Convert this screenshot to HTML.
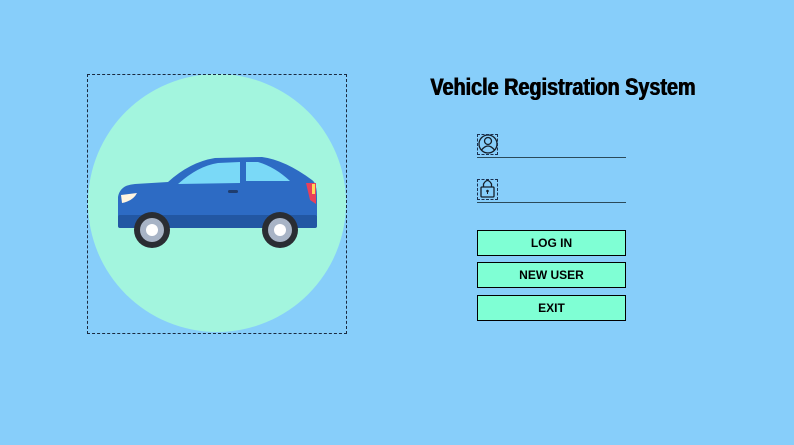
<!DOCTYPE html>
<html><head><style>
html,body{margin:0;padding:0}
body{width:794px;height:445px;background:#87cefa;position:relative;overflow:hidden;font-family:"Liberation Sans",sans-serif}
.frame{position:absolute;left:87px;top:74px;width:258px;height:258px;border:1px dashed #1a2a40}
.title{position:absolute;left:430px;top:74px;width:266px;font-weight:bold;font-size:24px;white-space:nowrap;transform-origin:left top;transform:scaleX(0.825);letter-spacing:0px;color:#000;text-shadow:1px 0 0 #000,0.5px 0 0 #000}
.line{position:absolute;left:477px;width:149px;height:1px;background:#2a4a5a}
.ic{position:absolute;left:477px;width:21px;height:21px;border:1px dashed #1a3050;box-sizing:border-box}
.btn{position:absolute;left:477px;width:149px;height:26px;background:#7fffd4;border:1px solid #000;box-sizing:border-box;font-weight:bold;font-size:12px;text-align:center;line-height:24px;color:#000}
</style></head><body>
<svg width="794" height="445" style="position:absolute;left:0;top:0">
<circle cx="217" cy="203" r="129" fill="#a3f5de"/>
<path d="M118 197 Q120 185 135 184 L168 182 Q190 162 215 158 L262 157 Q285 160 312 180 Q317 183 317 198 L317 225 Q317 228 313 228 L121 228 Q118 228 118 224 Z" fill="#2d6bc4"/>
<rect x="118" y="215" width="199" height="13" rx="2" fill="#2257a3"/>
<path d="M178 184 Q198 166 218 163 L240 162 L240 183 Z" fill="#7ad9f7"/>
<path d="M246 162 L258 162 Q275 167 290 181 L246 181 Z" fill="#7ad9f7"/>
<rect x="228" y="190" width="10" height="3" rx="1.5" fill="#1f3d6e"/>
<path d="M121 195 L137 193 Q133 201 122 203 Z" fill="#fff4e0"/>
<path d="M306 183 L316 183 L316 204 L310 200 Z" fill="#e8405a"/>
<rect x="312" y="184" width="3" height="10" fill="#ffd75a"/>
<circle cx="152" cy="230" r="18" fill="#2a2d33"/><circle cx="152" cy="230" r="12" fill="#a8b4c6"/><circle cx="152" cy="230" r="6" fill="#fff"/>
<circle cx="280" cy="230" r="18" fill="#2a2d33"/><circle cx="280" cy="230" r="12" fill="#a8b4c6"/><circle cx="280" cy="230" r="6" fill="#fff"/>
<g fill="none" stroke="#15202b" stroke-width="1.3">
<circle cx="488" cy="144" r="9"/><circle cx="488" cy="141" r="3.5"/><path d="M481.5 150 Q488 142 494.5 150"/>
<rect x="481" y="187" width="13" height="10" rx="1"/><path d="M483.5 187 V184 Q487.5 177 491.5 184 V187"/>
</g>
<circle cx="487.5" cy="191" r="1.3" fill="#15202b"/><rect x="487" y="191" width="1" height="3" fill="#15202b"/>
</svg>
<div class="frame"></div>
<div class="title">Vehicle Registration System</div>
<div class="ic" style="top:134px"></div>
<div class="ic" style="top:179px"></div>
<div class="line" style="top:157px"></div>
<div class="line" style="top:202px"></div>
<div class="btn" style="top:230px">LOG IN</div>
<div class="btn" style="top:262px">NEW USER</div>
<div class="btn" style="top:295px">EXIT</div>
</body></html>
